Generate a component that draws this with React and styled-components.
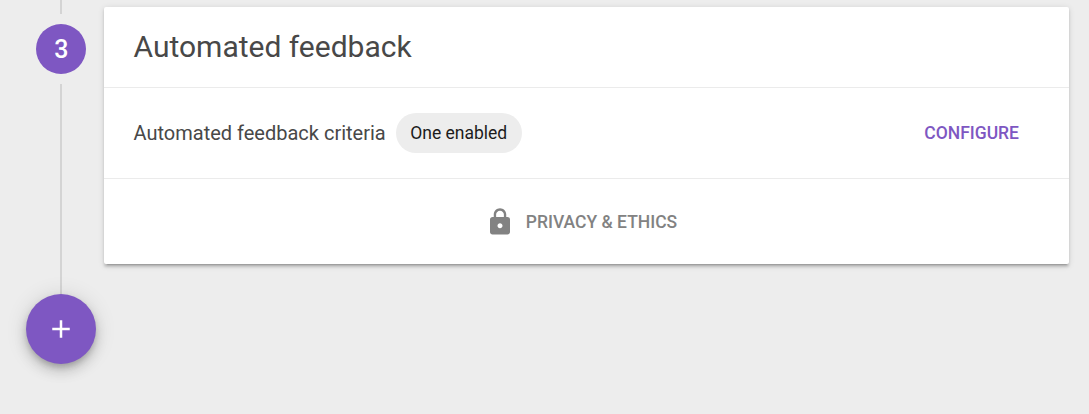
import React from "react";
import styled, { createGlobalStyle } from "styled-components";
import { MdAdd, MdLock } from "react-icons/md";

const GlobalStyle = createGlobalStyle`
  * {
    box-sizing: border-box;
  }

  body {
    margin: 0;
    background: #ededed;
    font-family: Roboto, "Liberation Sans", sans-serif;
  }
`;

const Page = styled.div`
  display: flex;
  align-items: flex-start;
  height: 414px;
  padding: 0 20px 0 26px;
  overflow: hidden;
`;

const Rail = styled.div`
  display: flex;
  flex-direction: column;
  align-items: center;
  width: 70px;
  margin-right: 8px;
`;

const Line = styled.div`
  width: 2px;
  height: ${(props) => props.$length}px;
  background: #d4d4d4;
`;

const StepNumber = styled.div`
  display: flex;
  align-items: center;
  justify-content: center;
  width: 50px;
  height: 50px;
  margin: 10.4px 0 9.6px 0.75px;
  border-radius: 50%;
  background: #7e57c2;
  color: #fff;
  font-size: 25px;
  font-weight: 500;
`;

const AddButton = styled.button`
  display: flex;
  align-items: center;
  justify-content: center;
  width: 70px;
  height: 70px;
  padding: 0;
  border: 0;
  border-radius: 50%;
  background: #7e57c2;
  color: #fff;
  font-size: 30px;
  box-shadow: 0 3.75px 6.25px -1.25px rgba(0, 0, 0, 0.2),
    0 7.5px 12.5px rgba(0, 0, 0, 0.14), 0 1.25px 22.5px rgba(0, 0, 0, 0.12);
`;

const Card = styled.section`
  flex: 1;
  margin-top: 7px;
  border-radius: 2px;
  background: #fff;
  color: #484848;
  box-shadow: 0 3.75px 1.25px -2.5px rgba(0, 0, 0, 0.2),
    0 2.5px 2.5px rgba(0, 0, 0, 0.14), 0 1.25px 6.25px rgba(0, 0, 0, 0.12);
`;

const CardTitle = styled.h2`
  height: 80px;
  margin: 0;
  padding: 0 29.5px;
  font-size: 30px;
  font-weight: 400;
  line-height: 79px;
`;

const CardRow = styled.div`
  display: flex;
  align-items: center;
  height: 91px;
  padding: 0 50px 0 29.5px;
  border-top: 1px solid #ebebeb;
`;

const Label = styled.span`
  font-size: 20px;
`;

const Chip = styled.span`
  height: 40px;
  margin-left: 10px;
  padding: 0 14.5px;
  border-radius: 20px;
  background: #ededed;
  color: #1c1c1c;
  font-size: 17.5px;
  line-height: 40px;
`;

const ConfigureButton = styled.button`
  margin-left: auto;
  padding: 0;
  border: 0;
  background: none;
  color: #7e57c2;
  font: 500 17.5px Roboto, "Liberation Sans", sans-serif;
  text-transform: uppercase;
`;

const CardFooter = styled.div`
  display: flex;
  align-items: center;
  justify-content: center;
  height: 86px;
  padding-right: 10.5px;
  border-top: 1px solid #ebebeb;
  color: #828282;
  font-size: 17.5px;
  font-weight: 500;
  text-transform: uppercase;

  svg {
    margin-right: 10.5px;
    font-size: 30px;
  }
`;

const App = () => {
  return (
    <>
      <GlobalStyle />
      <Page>
        <Rail>
          <Line $length={14} />
          <StepNumber>3</StepNumber>
          <Line $length={210} />
          <AddButton aria-label="Add">
            <MdAdd />
          </AddButton>
        </Rail>
        <Card>
          <CardTitle>Automated feedback</CardTitle>
          <CardRow>
            <Label>Automated feedback criteria</Label>
            <Chip>One enabled</Chip>
            <ConfigureButton>Configure</ConfigureButton>
          </CardRow>
          <CardFooter>
            <MdLock />
            <span>Privacy &amp; Ethics</span>
          </CardFooter>
        </Card>
      </Page>
    </>
  );
};

export default App;
